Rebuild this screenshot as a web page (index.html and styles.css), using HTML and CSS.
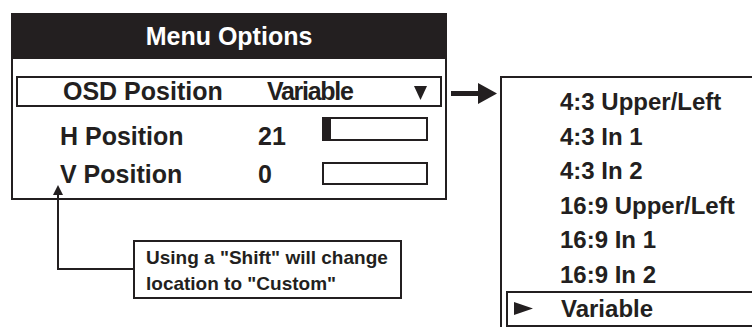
FILE: index.html
```html
<!DOCTYPE html>
<html lang="en">
<head>
    <meta charset="UTF-8" />
    <title>OSD Position</title>
    <link rel="stylesheet" href="styles.css">
</head>
<body>
    <div class="page">
        <div class="left-col">
            <div class="menu">
                <div class="menu-title">Menu Options</div>

                <div class="osd-row">
                    <span class="osd-label">OSD Position</span>
                    <span class="osd-value">Variable</span>
                    <svg class="caret" width="13" height="14" viewBox="0 0 13 14">
                        <polygon points="0,0 13,0 6.5,14" />
                    </svg>
                </div>

                <div class="rows">
                    <div class="row row-h">
                        <span class="label">H Position</span>
                        <span class="value">21</span>
                        <div class="bar"><div class="fill" style="width: 7%"></div></div>
                    </div>
                    <div class="row row-v">
                        <span class="label">V Position</span>
                        <span class="value">0</span>
                        <div class="bar"><div class="fill" style="width: 0%"></div></div>
                    </div>
                </div>
            </div>

            <div class="note">
                Using a "Shift" will change<br>
                location to "Custom"
            </div>
        </div>

        <svg class="pointer" width="46" height="21" viewBox="0 0 46 21">
            <rect x="0" y="8" width="28" height="5" />
            <polygon points="27,0 46,10.5 27,21" />
        </svg>

        <ul class="dropdown">
            <li>4:3 Upper/Left</li>
            <li>4:3 In 1</li>
            <li>4:3 In 2</li>
            <li>16:9 Upper/Left</li>
            <li>16:9 In 1</li>
            <li>16:9 In 2</li>
            <li class="selected">
                <svg class="mark" width="19" height="13" viewBox="0 0 19 13">
                    <polygon points="0,0 19,6.5 0,13" />
                </svg>
                Variable
            </li>
        </ul>

        <!-- leader line from the callout up to V Position -->
        <svg class="leader" width="752" height="327" viewBox="0 0 752 327">
            <polyline points="58,193 58,269 134,269" />
            <polygon points="58,185 53,195 63,195" />
        </svg>
    </div>
</body>
</html>
```

FILE: styles.css
```css
body {
    margin: 0;
    background-color: #fff;
    color: #231f20;
    font-family: 'Liberation Sans', Arial, sans-serif;
    font-weight: bold;
}

.page {
    position: relative;
    display: flex;
    align-items: flex-start;
    height: 327px;
    padding: 13px 0 0 11px;
    box-sizing: border-box;
    overflow: hidden;
}

.left-col {
    display: flex;
    flex-direction: column;
}

.menu {
    width: 436px;
    box-sizing: border-box;
    border: 2px solid #231f20;
    padding-bottom: 5px;
}

.menu-title {
    height: 44px;
    background-color: #231f20;
    color: #fff;
    font-size: 25px;
    line-height: 42px;
    text-align: center;
}

.osd-row {
    display: flex;
    align-items: center;
    height: 31px;
    box-sizing: border-box;
    margin: 17px 3px 0 3px;
    padding-left: 45px;
    border: 2px solid #231f20;
    font-size: 25px;
    line-height: 27px;
}

.osd-label {
    width: 204px;
}

.osd-value {
    width: 147px;
    letter-spacing: -1.3px; /*narrower, like the printed menu*/
}

.caret {
    fill: #231f20;
    margin-top: 2px;
}

.rows {
    padding: 10px 0 0 47px;
}

.row {
    display: grid;
    grid-template-columns: 198px 64px 106px;
    align-items: start;
    height: 38px;
    font-size: 25px;
    line-height: 30px;
}

.label,
.value {
    padding-top: 4px;
}

.bar {
    height: 24px;
    box-sizing: border-box;
    border: 2px solid #231f20;
}

.row-v .bar {
    margin-top: 7px;
    height: 23px;
}

.fill {
    height: 100%;
    background-color: #231f20;
}

.note {
    width: 269px;
    height: 59px;
    box-sizing: border-box;
    margin: 40px 0 0 122px;
    padding: 3px 0 0 11px;
    border: 2px solid #231f20;
    font-size: 19px;
    line-height: 26px;
}

.pointer {
    flex-shrink: 0;
    margin: 70px 0 0 4px;
    fill: #231f20;
}

.dropdown {
    flex-shrink: 0;
    list-style: none;
    width: 290px;
    height: 300px;
    margin: 63px 0 0 3px;
    padding: 7px 0 0 0;
    border: 2px solid #231f20;
    font-size: 24px;
    line-height: 34.6px;
}

.dropdown li {
    padding-left: 58px;
}

.dropdown li.selected {
    display: flex;
    align-items: center;
    margin: -2px 0 0 4px;
    padding-left: 6px;
    border: 2px solid #231f20;
    border-right: none;
    line-height: 32px;
}

.mark {
    fill: #231f20;
    margin-right: 28px;
}

.leader {
    position: absolute;
    top: 0;
    left: 0;
    pointer-events: none;
}

.leader polyline {
    fill: none;
    stroke: #231f20;
    stroke-width: 2;
}

.leader polygon {
    fill: #231f20;
}
```
